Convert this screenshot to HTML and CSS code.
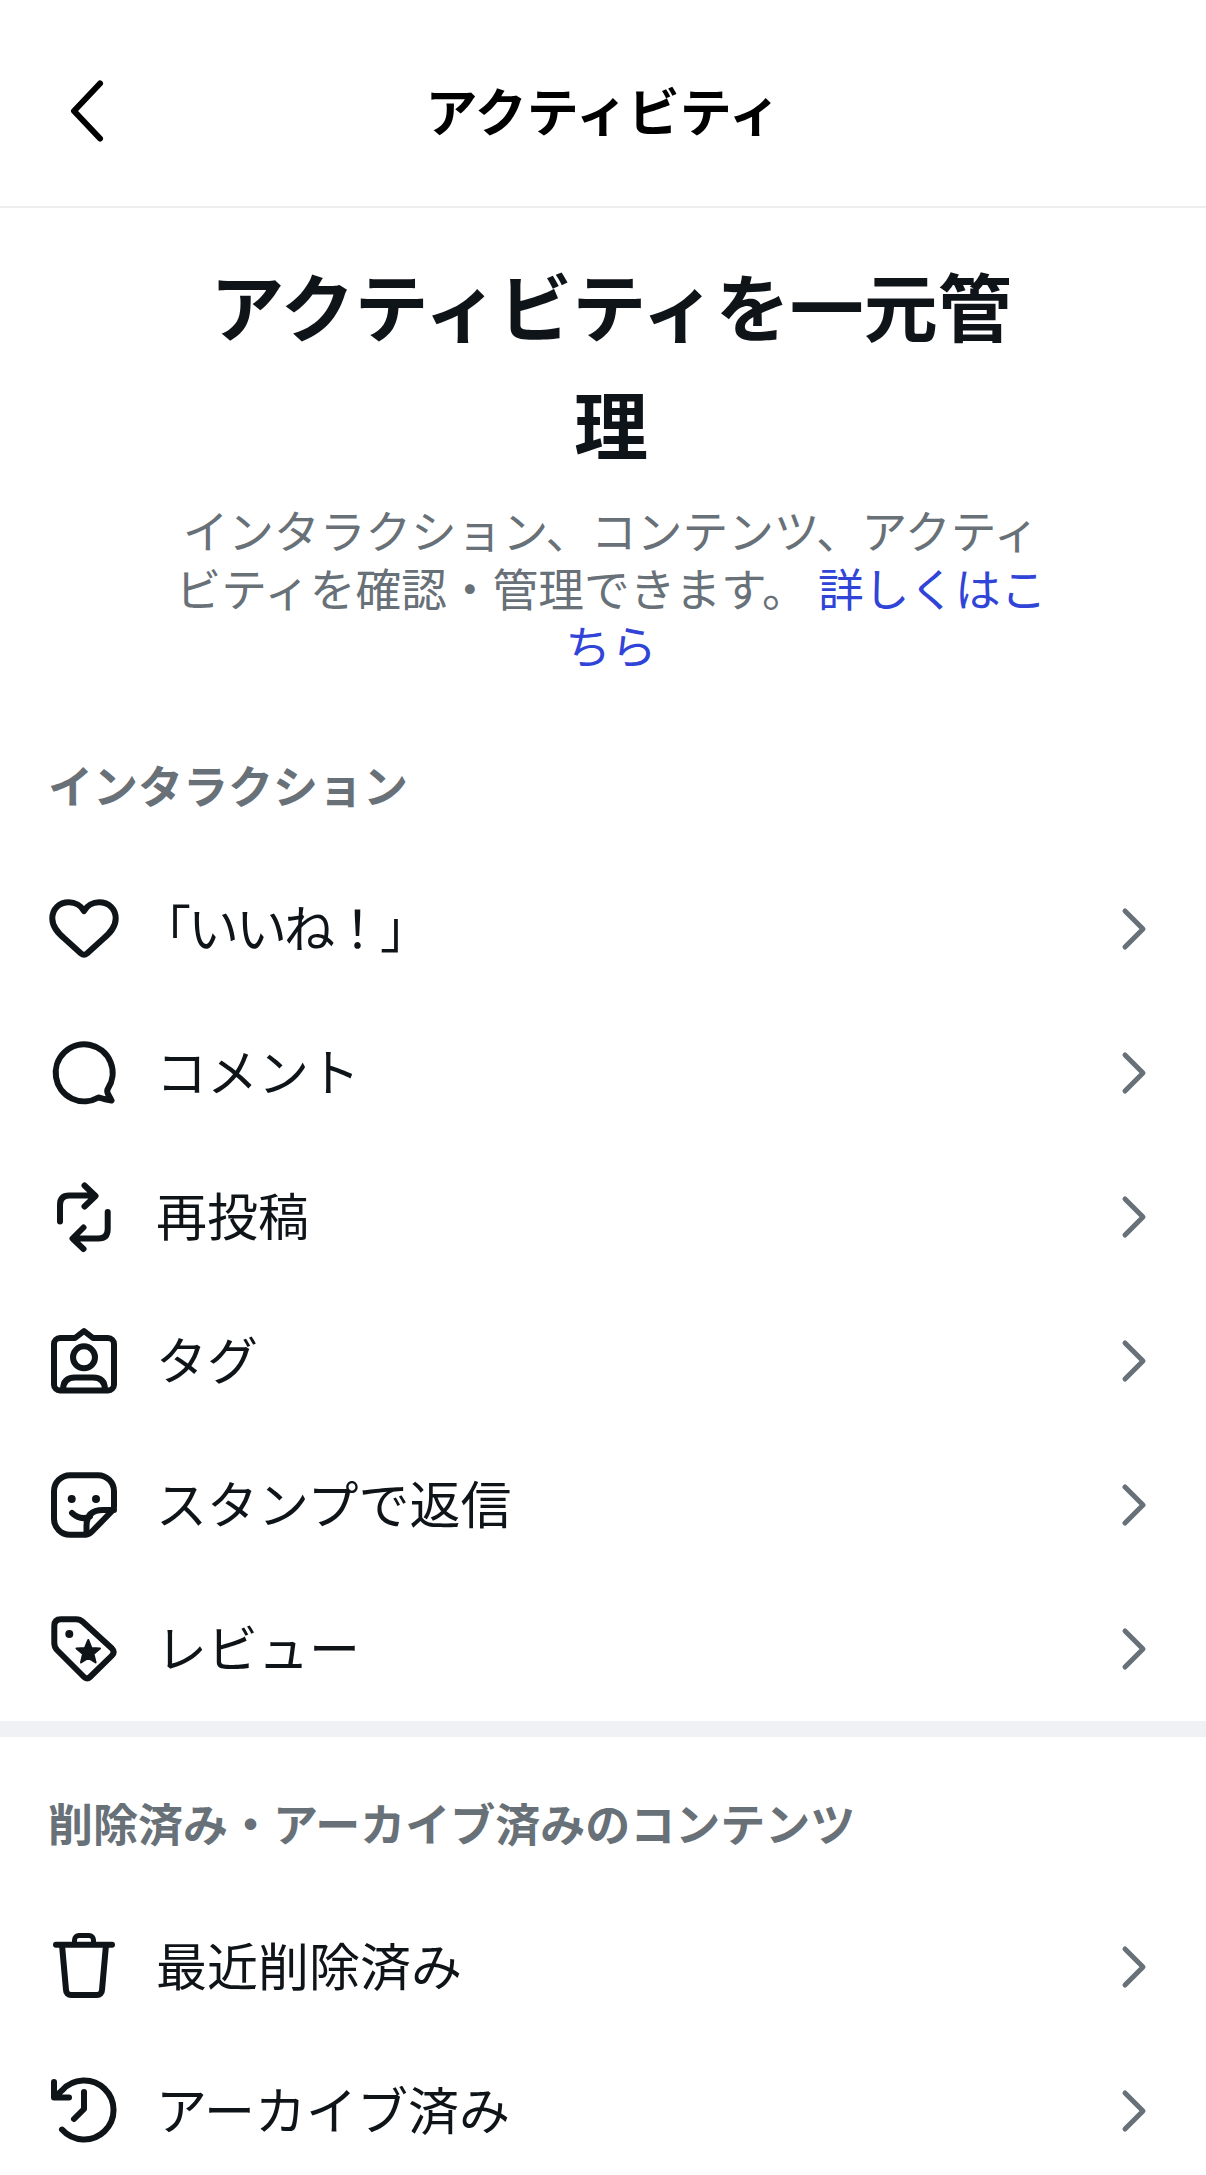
FILE: index.html
```html
<!DOCTYPE html>
<html lang="ja">
<head>
<meta charset="utf-8">
<title>アクティビティ</title>
<link rel="stylesheet" href="styles.css">
</head>
<body>
<header class="topbar">
  <button class="back" aria-label="戻る">
    <svg viewBox="0 0 48 72" class="back-icon"><path d="M34 9.5 8 37 34 64.500"/></svg>
  </button>
  <h1 class="topbar-title">アクティビティ</h1>
</header>

<section class="intro">
  <h2 class="intro-title">アクティビティを一元管理</h2>
  <p class="intro-text">インタラクション、コンテンツ、アクティビティを確認・管理できます。 <a class="link" href="#">詳しくはこちら</a></p>
</section>

<section class="group">
  <h3 class="group-label">インタラクション</h3>
  <ul class="rows">
    <li class="row">
      <svg class="icon" viewBox="0 0 72 72"><path d="M36 18C33 12.500 27 9.300 21 9.300 11 9.300 4.300 16 4.300 25.500 4.300 34 10 40 17 46L33 60.500Q36 63 39 60.500L55 46C62 40 67.700 34 67.700 25.500 67.700 16 61 9.300 51 9.300 45 9.300 39 12.500 36 18Z"/></svg>
      <span class="row-text row-text-quoted">「いいね！」</span>
      <svg class="chevron" viewBox="0 0 30 48"><path d="M5 6 23 24 5 42"/></svg>
    </li>
    <li class="row">
      <svg class="icon" viewBox="0 0 72 72"><path d="M50.500 60.500A28.500 28.500 0 1 1 60 51.500Q58.500 53.500 60 57L63.500 63.500 56 62Q53 61 50.500 60.500Z"/></svg>
      <span class="row-text">コメント</span>
      <svg class="chevron" viewBox="0 0 30 48"><path d="M5 6 23 24 5 42"/></svg>
    </li>
    <li class="row">
      <svg class="icon" viewBox="0 0 72 72"><path d="M12 40.500V24Q12 14.500 21 14.500H46M36.500 4.500 47.500 15 36.500 25.500M59.700 31V48Q59.700 57.500 50.500 57.500H26M35.500 46.500 24.500 57.500 35.500 68"/></svg>
      <span class="row-text">再投稿</span>
      <svg class="chevron" viewBox="0 0 30 48"><path d="M5 6 23 24 5 42"/></svg>
    </li>
    <li class="row">
      <svg class="icon" viewBox="0 0 72 72"><path d="M12 13H27L36 6 45 13H60A6 6 0 0 1 66 19V59.500A6 6 0 0 1 60 65.500H12A6 6 0 0 1 6 59.500V19A6 6 0 0 1 12 13Z"/><circle cx="36" cy="32.300" r="11"/><path d="M15 65Q15 52.500 27 52.500H45Q57 52.500 57 65"/></svg>
      <span class="row-text">タグ</span>
      <svg class="chevron" viewBox="0 0 30 48"><path d="M5 6 23 24 5 42"/></svg>
    </li>
    <li class="row">
      <svg class="icon" viewBox="0 0 72 72"><path d="M22 6.300H50A16 16 0 0 1 66 22.300V38Q66 40 64.500 41.500L44 62.500Q41 65.700 38 65.700H22A16 16 0 0 1 6 49.700V22.300A16 16 0 0 1 22 6.300Z"/><path d="M24 44Q33 52 42 47.500M38.500 65V57Q38.500 41 55 41H66"/><circle class="solid" cx="23.700" cy="30" r="4"/><circle class="solid" cx="48" cy="30" r="4"/></svg>
      <span class="row-text">スタンプで返信</span>
      <svg class="chevron" viewBox="0 0 30 48"><path d="M5 6 23 24 5 42"/></svg>
    </li>
    <li class="row">
      <svg class="icon" viewBox="0 0 72 72"><path d="M13 6.300H28Q32 6.300 35 9L64 35.500Q67.500 39 64 42.500L42 64Q39 67 36 64L9 37Q6.300 34 6.300 30V13Q6.300 6.300 13 6.300Z"/><circle class="solid" cx="21.300" cy="21" r="4"/><polygon class="solid star" points="40.300,27 43.500,35 52,35.500 45.500,41 47.600,49.500 40.300,45 33,49.500 35,41 28.500,35.500 37,35"/></svg>
      <span class="row-text">レビュー</span>
      <svg class="chevron" viewBox="0 0 30 48"><path d="M5 6 23 24 5 42"/></svg>
    </li>
  </ul>
</section>

<div class="divider"></div>

<section class="group">
  <h3 class="group-label">削除済み・アーカイブ済みのコンテンツ</h3>
  <ul class="rows">
    <li class="row">
      <svg class="icon" viewBox="0 0 72 72"><path d="M8 13.700H64M14 14 18 59A5 5 0 0 0 23 64H49A5 5 0 0 0 54 59L58 14"/><path class="thin" d="M26.500 12V9A4.500 4.500 0 0 1 31 4.500H41A4.500 4.500 0 0 1 45.500 9V12"/></svg>
      <span class="row-text">最近削除済み</span>
      <svg class="chevron" viewBox="0 0 30 48"><path d="M5 6 23 24 5 42"/></svg>
    </li>
    <li class="row">
      <svg class="icon" viewBox="0 0 72 72"><path d="M6 7V22.500H21M8 21 14 15.400A29.500 29.500 0 1 1 14 54.600M36 17V34L26 44"/></svg>
      <span class="row-text">アーカイブ済み</span>
      <svg class="chevron" viewBox="0 0 30 48"><path d="M5 6 23 24 5 42"/></svg>
    </li>
  </ul>
</section>
</body>
</html>
```

FILE: styles.css
```css
* {
  box-sizing: border-box;
}

html,
body {
  margin: 0;
  height: 2175px;
  overflow: hidden;
  background: #fff;
}

body {
  color: #0f1419;
  font-family: "Noto Sans CJK JP", "Noto Sans", sans-serif;
}

h1,
h2,
h3,
p,
ul {
  margin: 0;
  padding: 0;
}

.topbar {
  position: relative;
  height: 208px;
  border-bottom: 2px solid #eeeeef;
  display: flex;
  align-items: center;
  justify-content: center;
  padding-top: 14px;
}

.back {
  position: absolute;
  left: 66px;
  top: 74px;
  width: 48px;
  height: 72px;
  padding: 0;
  border: 0;
  background: none;
}

.back-icon {
  display: block;
  width: 48px;
  height: 72px;
  fill: none;
  stroke: #000;
  stroke-width: 6;
  stroke-linecap: round;
  stroke-linejoin: round;
}

.topbar-title {
  font-size: 52px;
  font-weight: 700;
  line-height: 72px;
  color: #000;
}

.intro {
  padding: 37px 0 81px 166px;
  width: 1056px;
  text-align: center;
}

.intro-title {
  margin: 0 auto;
  width: 870px;
  font-size: 74px;
  font-weight: 700;
  line-height: 118px;
}

.intro-text {
  margin-top: 20px;
  font-size: 45.700px;
  line-height: 57.500px;
  color: #687078;
}

.link {
  color: #3044d8;
  text-decoration: none;
}

.group {
  padding-top: 56px;
}

.intro + .group {
  padding-top: 0;
}

.group-label {
  padding: 0 48px;
  font-size: 45px;
  font-weight: 700;
  line-height: 60px;
  color: #687078;
  margin-bottom: 42px;
}

.rows {
  list-style: none;
}

.row {
  height: 144px;
  display: flex;
  align-items: center;
  padding: 0 56px 0 48px;
  gap: 36px;
}

.icon {
  flex: none;
  width: 72px;
  height: 72px;
  fill: none;
  stroke: #0f1419;
  stroke-width: 6;
  stroke-linecap: round;
  stroke-linejoin: round;
}

.icon .solid {
  fill: #0f1419;
  stroke: none;
}

.icon .star {
  stroke: #0f1419;
  stroke-width: 2;
}

.icon .thin {
  stroke-width: 5;
}

.row-text {
  flex: 1;
  font-size: 51px;
  line-height: 72px;
  padding-bottom: 5px;
}

/* The opening bracket carries half an em of blank space; pull it back to the text edge. */
.row-text-quoted {
  margin-left: -16px;
  letter-spacing: -3px;
}

.chevron {
  flex: none;
  width: 30px;
  height: 48px;
  fill: none;
  stroke: #687078;
  stroke-width: 5;
  stroke-linecap: round;
  stroke-linejoin: round;
}

.divider {
  height: 16px;
  background: #eff1f5;
}
```
